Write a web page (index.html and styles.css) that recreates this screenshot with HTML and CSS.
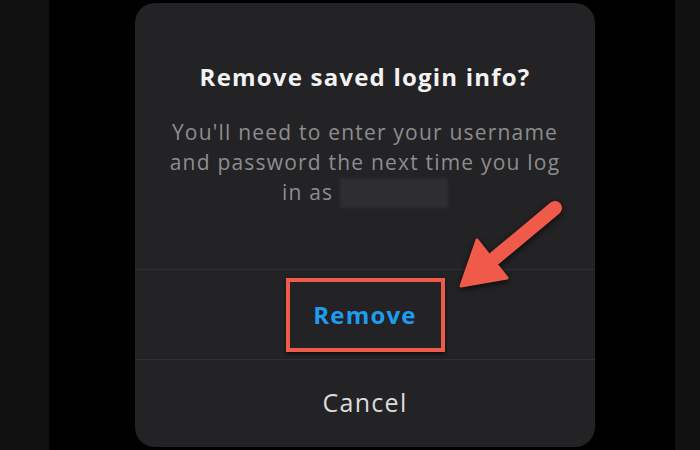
FILE: index.html
```html
<!DOCTYPE html>
<html>
<head>
<meta charset="utf-8">
<link rel="stylesheet" href="styles.css">
</head>
<body>
<div class="frame">
  <div class="strip strip-left"></div>
  <div class="stage">
    <div class="dialog">
      <div class="dialog-head">
        <h1 class="title">Remove saved login info?</h1>
        <p class="message">You'll need to enter your username and password the next time you log in as <span class="redacted"></span></p>
      </div>
      <div class="action action-remove">
        <span class="highlight"><span class="remove-label">Remove</span></span>
      </div>
      <div class="action action-cancel">Cancel</div>
    </div>
    <svg class="arrow" width="140" height="120" viewBox="0 0 140 120" xmlns="http://www.w3.org/2000/svg">
      <line x1="124" y1="18" x2="64" y2="68" stroke="#f05a4a" stroke-width="14" stroke-linecap="round"/>
      <polygon points="30,96 46,50 76,88" fill="#f05a4a" stroke="#f05a4a" stroke-width="3" stroke-linejoin="round"/>
    </svg>
  </div>
  <div class="strip strip-right"></div>
</div>
</body>
</html>
```

FILE: styles.css
```css
html, body {
  margin: 0;
  padding: 0;
  background: #000;
}
.frame {
  display: flex;
  width: 700px;
  height: 450px;
  overflow: hidden;
  font-family: "Open Sans", "Liberation Sans", sans-serif;
}
.strip {
  background: #111111;
}
.strip-left { width: 49px; }
.strip-right { width: 25px; }
.stage {
  position: relative;
  flex: 1;
  background: #000;
  padding-top: 3px;
  padding-left: 86px;
}
.dialog {
  width: 460px;
  height: 444px;
  background: #232325;
  border-radius: 20px;
  display: flex;
  flex-direction: column;
}
.dialog-head {
  height: 267px;
  box-sizing: border-box;
  padding: 59px 10px 0;
  text-align: center;
  border-bottom: 1px solid #303032;
}
.title {
  margin: 0;
  font-size: 24px;
  line-height: 30px;
  font-weight: 700;
  letter-spacing: 1.2px;
  color: #f2f2f2;
}
.message {
  margin: 25px auto 0;
  width: 396px;
  font-size: 21px;
  line-height: 30px;
  letter-spacing: 1.2px;
  color: #8d8d90;
}
.redacted {
  display: inline-block;
  width: 108px;
  height: 30px;
  vertical-align: -8px;
  background: #2e2e30;
  filter: blur(1px);
}
.action {
  display: flex;
  align-items: center;
  justify-content: center;
}
.action-remove {
  height: 89px;
  border-bottom: 1px solid #303032;
}
.highlight {
  display: flex;
  align-items: center;
  justify-content: center;
  width: 151px;
  height: 66px;
  border: 4px solid #ee5a4b;
  box-shadow: 0 2px 4px rgba(0,0,0,0.6);
}
.remove-label {
  font-size: 24px;
  font-weight: 700;
  letter-spacing: 1.2px;
  color: #1f9cf0;
}
.action-cancel {
  flex: 1;
  font-size: 25px;
  letter-spacing: 1.3px;
  color: #dcdcdc;
  padding-bottom: 4px;
}
.arrow {
  position: absolute;
  left: 382px;
  top: 190px;
  filter: drop-shadow(0 2px 3px rgba(0,0,0,0.7));
}
```
